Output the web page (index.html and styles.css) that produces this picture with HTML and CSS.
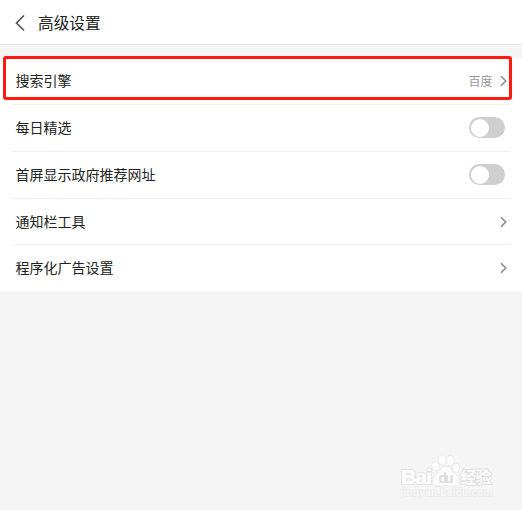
FILE: index.html
```html
<!DOCTYPE html>
<html lang="zh-CN">
<head>
<meta charset="utf-8">
<title>高级设置</title>
<link rel="stylesheet" href="styles.css">
</head>
<body>
<header class="header">
  <svg class="back" viewBox="0 0 10 18"><path d="M9 1.5 1.5 9 9 16.5"/></svg>
  <h1 class="title">高级设置</h1>
</header>
<main class="list">
  <div class="row">
    <span class="label">搜索引擎</span>
    <span class="value">百度</span>
    <svg class="chevron" viewBox="0 0 7 12"><path d="M1 1.2 5.8 6 1 10.8"/></svg>
    <div class="highlight"></div>
  </div>
  <div class="row"><span class="label">每日精选</span><span class="switch"></span></div>
  <div class="row"><span class="label">首屏显示政府推荐网址</span><span class="switch"></span></div>
  <div class="row">
    <span class="label">通知栏工具</span>
    <svg class="chevron" viewBox="0 0 7 12"><path d="M1 1.2 5.8 6 1 10.8"/></svg>
  </div>
  <div class="row">
    <span class="label">程序化广告设置</span>
    <svg class="chevron" viewBox="0 0 7 12"><path d="M1 1.2 5.8 6 1 10.8"/></svg>
  </div>
</main>
<svg class="watermark" viewBox="0 0 100 50">
  <g class="mark">
    <text class="brand outline" x="5" y="31.5" textLength="31">Bai</text>
    <text class="brand" x="5" y="31.5" textLength="31">Bai</text>
    <ellipse cx="39.5" cy="14" rx="3.4" ry="4.6" transform="rotate(-18 39.5 14)"/>
    <ellipse cx="46.3" cy="8" rx="3.5" ry="5"/>
    <ellipse cx="54.5" cy="8.5" rx="3.5" ry="4.8"/>
    <ellipse cx="60" cy="16" rx="3.2" ry="4.6" transform="rotate(18 60 16)"/>
    <path d="M50 14.5c-4 0-5.500 4-9 7-5 4-5.500 12 1 12.500 3 .3 5-.7 8-.7s5 1 8 .7c6.500-.5 6-8.500 1-12.500-3.500-3-5-7-9-7Z"/>
    <text class="du" x="42.500" y="31" textLength="15">du</text>
    <text class="cn" x="64.500" y="30.500" textLength="31">经验</text>
    <text class="url" x="4.500" y="43.500" textLength="92">jingyan.baidu.com</text>
  </g>
</svg>
</body>
</html>
```
FILE: styles.css
```css
* { box-sizing: border-box; }
body {
  margin: 0;
  height: 510px;
  overflow: hidden;
  background: #f5f5f5;
  color: #222;
  font-family: "Noto Sans CJK SC", sans-serif;
}
.header {
  height: 45px;
  display: flex;
  align-items: center;
  gap: 13px;
  padding: 1px 15px 0;
  background: #fff;
  border-bottom: 1px solid #e3e3e3;
}
.back { width: 10px; height: 18px; }
.back path { fill: none; stroke: #555; stroke-width: 1.7; }
.title { margin: 0; font-size: 15.7px; font-weight: 400; line-height: 24px; }
.list {
  margin-top: 13px;
  display: grid;
  grid-template-rows: 46px 47px 47px 46px 47px;
  padding: 0 11px 0 12px;
  background: #fff;
}
.row {
  position: relative;
  display: flex;
  align-items: center;
  padding: 0 4px 0 3.5px;
}
.row + .row { border-top: 1px solid #eee; }
.label { flex: 1; padding-bottom: 2px; font-size: 14px; line-height: 20px; }
.value { margin-right: 7.5px; font-size: 12px; line-height: 18px; color: #999; }
.chevron { width: 7px; height: 12px; }
.chevron path { fill: none; stroke: #888; stroke-width: 1.5; }
.switch {
  width: 36.5px;
  height: 21px;
  margin: 0 2px 1px 0;
  padding: 1.5px 2px;
  border-radius: 11px;
  background: #cfcfcf;
}
.switch::before {
  content: "";
  display: block;
  width: 18px;
  height: 18px;
  border-radius: 50%;
  background: #fff;
}
.highlight {
  position: absolute;
  left: -9px;
  top: -2px;
  width: 509px;
  height: 44px;
  border: 3px solid #ff1a0f;
  border-radius: 3px;
}
.watermark {
  position: absolute;
  left: 396px;
  top: 452px;
  width: 100px;
  height: 50px;
}
.mark { fill: #fcfcfc; stroke: #e0e0e0; stroke-width: 1; paint-order: stroke; }
.brand { font: bold 21px "Liberation Sans", sans-serif; stroke: #fcfcfc; stroke-width: .5; }
.outline { stroke: #dedede; stroke-width: 2.2; }
.du { font: bold 14px "Liberation Sans", sans-serif; fill: #dcdcdc; stroke: none; }
.cn { font: bold 16px "Noto Sans CJK SC", sans-serif; stroke: #dedede; stroke-width: 1.8; }
.url { font: bold 10px "Liberation Sans", sans-serif; fill: #f8f8f8; stroke: #e8e8e8; stroke-width: 1.2; }
```
